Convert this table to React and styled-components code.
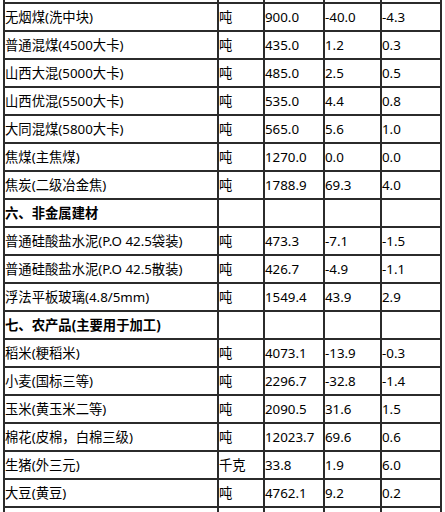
import React from 'react';
import styled, { createGlobalStyle } from 'styled-components';

const GlobalStyle = createGlobalStyle`
  html, body {
    margin: 0;
    padding: 0;
    background: #ffffff;
    overflow: hidden;
  }
`;

const Sheet = styled.div`
  display: flex;
  flex-direction: column;
  padding-left: 3px;
  height: 512px;
  overflow: hidden;
  font-family: "Noto Sans", "Noto Sans CJK SC", sans-serif;
  font-size: 10pt;
  color: #000;
`;

const Row = styled.div`
  display: grid;
  grid-template-columns: 216px 46px 60px 57px 60px;
  flex: none;
  height: ${(p) => (p.$stub ? '4px' : '28px')};
`;

const Cell = styled.div`
  box-sizing: border-box;
  display: flex;
  align-items: center;
  min-width: 0;
  padding: 0;
  border-right: 2px solid #2b2b2b;
  border-bottom: 2px solid #2b2b2b;
  white-space: nowrap;
  overflow: hidden;
  line-height: 18px;
  font-weight: ${(p) => (p.$bold ? 700 : 400)};

  &:first-child {
    border-left: 2px solid #2b2b2b;
  }
`;

const rows = [
  ['无烟煤(洗中块)', '吨', '900.0', '-40.0', '-4.3'],
  ['普通混煤(4500大卡)', '吨', '435.0', '1.2', '0.3'],
  ['山西大混(5000大卡)', '吨', '485.0', '2.5', '0.5'],
  ['山西优混(5500大卡)', '吨', '535.0', '4.4', '0.8'],
  ['大同混煤(5800大卡)', '吨', '565.0', '5.6', '1.0'],
  ['焦煤(主焦煤)', '吨', '1270.0', '0.0', '0.0'],
  ['焦炭(二级冶金焦)', '吨', '1788.9', '69.3', '4.0'],
  { title: '六、非金属建材' },
  ['普通硅酸盐水泥(P.O 42.5袋装)', '吨', '473.3', '-7.1', '-1.5'],
  ['普通硅酸盐水泥(P.O 42.5散装)', '吨', '426.7', '-4.9', '-1.1'],
  ['浮法平板玻璃(4.8/5mm)', '吨', '1549.4', '43.9', '2.9'],
  { title: '七、农产品(主要用于加工)' },
  ['稻米(粳稻米)', '吨', '4073.1', '-13.9', '-0.3'],
  ['小麦(国标三等)', '吨', '2296.7', '-32.8', '-1.4'],
  ['玉米(黄玉米二等)', '吨', '2090.5', '31.6', '1.5'],
  ['棉花(皮棉，白棉三级)', '吨', '12023.7', '69.6', '0.6'],
  ['生猪(外三元)', '千克', '33.8', '1.9', '6.0'],
  ['大豆(黄豆)', '吨', '4762.1', '9.2', '0.2'],
];

const empty = ['', '', '', '', ''];

export default function App() {
  return (
    <Sheet>
      <GlobalStyle />
      <Row $stub>
        {empty.map((_, i) => (
          <Cell key={i} />
        ))}
      </Row>
      {rows.map((row, r) => (
        <Row key={r}>
          {(row.title ? [row.title, '', '', '', ''] : row).map((v, i) => (
            <Cell key={i} $bold={!!row.title && i === 0}>
              {v}
            </Cell>
          ))}
        </Row>
      ))}
      <Row>
        {empty.map((_, i) => (
          <Cell key={i} />
        ))}
      </Row>
    </Sheet>
  );
}
